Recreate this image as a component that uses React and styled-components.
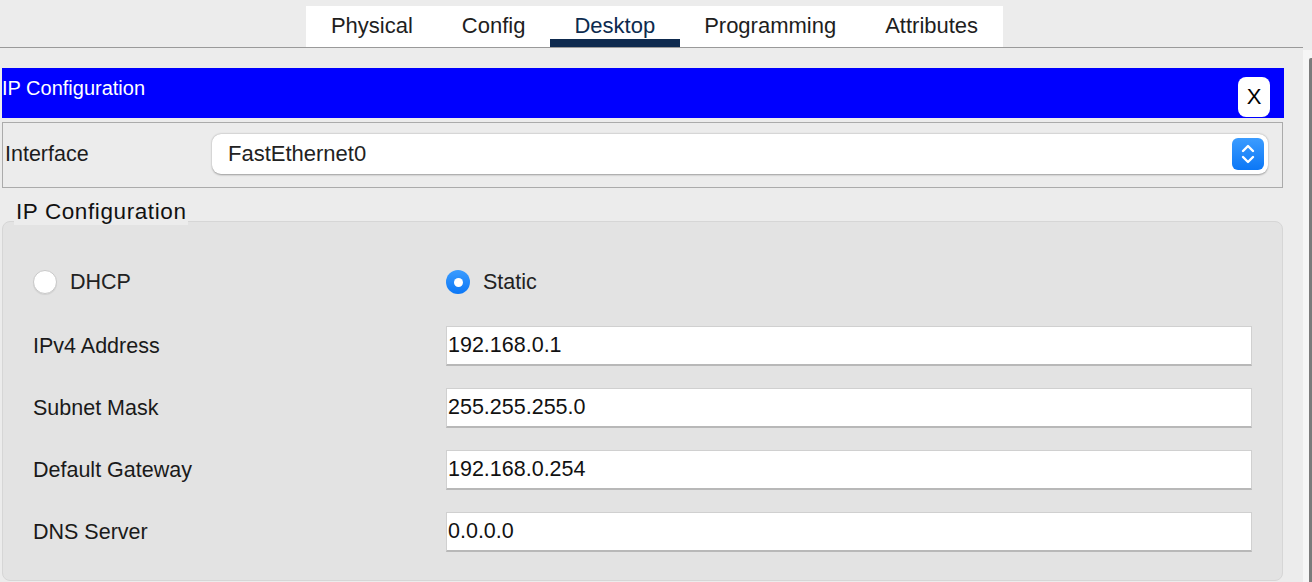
import React from 'react';
import styled, { createGlobalStyle } from 'styled-components';

const GlobalStyle = createGlobalStyle`
  html, body {
    margin: 0;
    padding: 0;
    background: #ececec;
    font-family: 'Liberation Sans', Arial, Helvetica, sans-serif;
    color: #1c1c1c;
  }
  * { box-sizing: border-box; }
`;

const Page = styled.div`
  display: flex;
  width: 1312px;
  height: 582px;
  overflow: hidden;
`;

const Main = styled.div`
  width: 1303px;
  display: flex;
  flex-direction: column;
`;

const Scroll = styled.div`
  width: 9px;
  display: flex;
  padding-top: 50px;
  background: #ececec;
`;

const ScrollTrack = styled.div`
  flex: 1;
  display: flex;
  justify-content: flex-end;
  background: #f6f6f6;
  padding-top: 8px;
`;

const ScrollThumb = styled.div`
  width: 3px;
  background: #7b7b7b;
  border-radius: 2px 0 0 0;
`;

const TabHeader = styled.div`
  height: 48px;
  padding-top: 6px;
  border-bottom: 1px solid #9a9a9a;
  display: flex;
  justify-content: center;
  padding-left: 6px;
`;

const Tabs = styled.div`
  display: flex;
  background: #fff;
  height: 41px;
`;

const Tab = styled.div`
  padding: 0 24.5px;
  font-size: 22px;
  line-height: 40px;
  color: ${(p) => (p.active ? '#0c2a4e' : '#1e1e1e')};
  border-bottom: 8px solid ${(p) => (p.active ? '#0e2a4e' : 'transparent')};
  height: 41px;
  white-space: nowrap;
`;

const Content = styled.div`
  padding: 20px 19px 0 2px;
  display: flex;
  flex-direction: column;
`;

const TitleBar = styled.div`
  height: 50px;
  background: #0000ff;
  display: flex;
  justify-content: space-between;
  align-items: flex-end;
  padding-right: 14px;
`;

const Title = styled.div`
  align-self: flex-start;
  color: #fff;
  font-size: 20px;
  line-height: 24px;
  padding-top: 8px;
`;

const CloseButton = styled.div`
  width: 32px;
  height: 40px;
  margin-bottom: 1px;
  background: #fff;
  border-radius: 8px;
  display: flex;
  align-items: center;
  justify-content: center;
  font-size: 22px;
  color: #000;
`;

const InterfaceBox = styled.div`
  margin-top: 4px;
  width: 1281px;
  height: 66px;
  border: 1px solid #ababab;
  display: flex;
  align-items: center;
  padding: 0 14px 0 2px;
`;

const InterfaceLabel = styled.div`
  width: 207px;
  font-size: 21.5px;
  line-height: 24px;
  margin-top: -2px;
  color: #1c1c1c;
`;

const Select = styled.div`
  flex: 1;
  height: 40px;
  margin-top: -2px;
  background: #fff;
  border-radius: 9px;
  box-shadow: 0 0.5px 2px rgba(0, 0, 0, 0.35);
  display: flex;
  align-items: center;
  justify-content: space-between;
  padding: 0 4px 0 16px;
  font-size: 22px;
  color: #222;
`;

const Stepper = styled.div`
  width: 32px;
  height: 32px;
  border-radius: 6px;
  background: linear-gradient(#3b9cff, #0b77f6);
  display: flex;
  align-items: center;
  justify-content: center;
`;

const Legend = styled.div`
  align-self: flex-start;
  margin: 11px 0 -4px 12px;
  padding: 0 1px 0 2px;
  font-size: 22.5px;
  letter-spacing: 0.6px;
  line-height: 26px;
  background: #ececec;
  position: relative;
  z-index: 1;
  color: #111;
`;

const Group = styled.div`
  width: 1281px;
  height: 360px;
  background: #e3e3e3;
  border: 1px solid #d6d6d6;
  border-radius: 8px;
  padding: 40px 30px 0 30px;
  display: grid;
  grid-template-columns: 413px 1fr;
  grid-template-rows: 42px repeat(4, 40px);
  row-gap: 22px;
`;

const RadioRow = styled.div`
  display: flex;
  align-items: center;
  align-self: start;
  height: 40px;
  gap: 13px;
  font-size: 21.5px;
  color: #222;
`;

const RadioCircle = styled.div`
  width: 24px;
  height: 24px;
  border-radius: 50%;
  display: flex;
  align-items: center;
  justify-content: center;
  background: ${(p) => (p.checked ? 'linear-gradient(#3b9cff, #0b77f6)' : '#fff')};
  border: ${(p) => (p.checked ? 'none' : '1px solid #c9c9c9')};
  box-shadow: ${(p) => (p.checked ? 'none' : '0 1px 1px rgba(0,0,0,0.08)')};
  &::after {
    content: '';
    display: ${(p) => (p.checked ? 'block' : 'none')};
    width: 9px;
    height: 9px;
    border-radius: 50%;
    background: #fff;
  }
`;

const FieldLabel = styled.div`
  display: flex;
  align-items: center;
  font-size: 21.5px;
  color: #1a1a1a;
`;

const Input = styled.div`
  height: 40px;
  background: #fff;
  border: 1px solid #d0d0d0;
  border-bottom: 2px solid #b8b8b8;
  display: flex;
  align-items: center;
  padding-left: 1px;
  font-size: 21.5px;
  color: #111;
`;

const fields = [
  ['IPv4 Address', '192.168.0.1'],
  ['Subnet Mask', '255.255.255.0'],
  ['Default Gateway', '192.168.0.254'],
  ['DNS Server', '0.0.0.0'],
];

const tabs = ['Physical', 'Config', 'Desktop', 'Programming', 'Attributes'];

function Chevrons() {
  return (
    <svg width="18" height="24" viewBox="0 0 18 24" fill="none">
      <path d="M4 9 L9 4 L14 9" stroke="#fff" strokeWidth="2.4" strokeLinecap="round" strokeLinejoin="round" />
      <path d="M4 15 L9 20 L14 15" stroke="#fff" strokeWidth="2.4" strokeLinecap="round" strokeLinejoin="round" />
    </svg>
  );
}

export default function App() {
  return (
    <Page>
      <GlobalStyle />
      <Main>
        <TabHeader>
          <Tabs>
            {tabs.map((t) => (
              <Tab key={t} active={t === 'Desktop'}>{t}</Tab>
            ))}
          </Tabs>
        </TabHeader>
        <Content>
          <TitleBar>
            <Title>IP Configuration</Title>
            <CloseButton>X</CloseButton>
          </TitleBar>
          <InterfaceBox>
            <InterfaceLabel>Interface</InterfaceLabel>
            <Select>
              FastEthernet0
              <Stepper><Chevrons /></Stepper>
            </Select>
          </InterfaceBox>
          <Legend>IP Configuration</Legend>
          <Group>
            <RadioRow>
              <RadioCircle />
              DHCP
            </RadioRow>
            <RadioRow>
              <RadioCircle checked />
              Static
            </RadioRow>
            {fields.map(([label, value]) => (
              <React.Fragment key={label}>
                <FieldLabel>{label}</FieldLabel>
                <Input>{value}</Input>
              </React.Fragment>
            ))}
          </Group>
        </Content>
      </Main>
      <Scroll>
        <ScrollTrack>
          <ScrollThumb />
        </ScrollTrack>
      </Scroll>
    </Page>
  );
}
